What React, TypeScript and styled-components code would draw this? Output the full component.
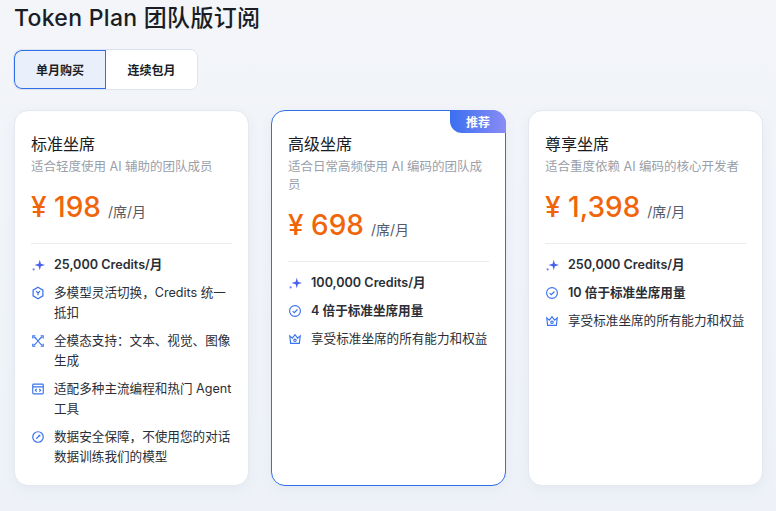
import React from "react";
import styled, { createGlobalStyle } from "styled-components";

const G = createGlobalStyle`
  body { margin:0; background:#f1f4f9; font-family: Inter, "Noto Sans CJK SC", sans-serif; color:#1a1d24; }
`;
const Page = styled.div`
  width:776px; height:511px; box-sizing:border-box; padding:0 13px 0 13px;
  background: linear-gradient(180deg,#f3f5f9,#eef2f8);
`;
const Title = styled.h1`
  margin:0; padding-top:3px; padding-left:1px; font-size:23px; font-weight:500; line-height:30px; letter-spacing:0.3px;
`;
const Toggle = styled.div`
  display:inline-flex; margin-top:16px; border:1px solid #dde3ee; border-radius:8px; background:#fff; overflow:hidden;
`;
const Tab = styled.button<{ $on?: boolean }>`
  width:${p => p.$on ? 92 : 91}px; height:39px; border:0; margin:0; font:600 12px Inter,"Noto Sans CJK SC",sans-serif; color:#1a1d24;
  background:${p => p.$on ? "#eaf0fb" : "#fff"};
  box-shadow:${p => p.$on ? "inset 0 0 0 1px #2f6fe8" : "none"}; border-radius:${p => p.$on ? "8px 0 0 8px" : "0"};
`;
const Cards = styled.div`
  display:grid; grid-template-columns:repeat(3,235px); gap:22px; margin-top:20px; padding-left:1px;
`;
const Card = styled.div<{ $hl?: boolean }>`
  position:relative; height:376px; box-sizing:border-box; background:#fff; border-radius:14px;
  border:1px solid ${p => p.$hl ? "#2f6fe8" : "#e3e8f1"}; padding:22px 16px 0 16px;
  box-shadow: 0 4px 14px rgba(60,80,130,0.06);
`;
const Badge = styled.div`
  position:absolute; top:-1px; right:-1px; width:56px; height:23px; border-radius:0 14px 0 12px;
  background:linear-gradient(90deg,#3a6ff0,#8a8cf5); color:#fff; font-size:12px; font-weight:600;
  display:flex; align-items:center; justify-content:center;
`;
const Name = styled.div`font-size:16px; line-height:22px;`;
const Sub = styled.div`margin-top:3px; font-size:12.5px; color:#9aa0aa; line-height:18px;`;
const Price = styled.div`margin-top:13px; display:flex; align-items:baseline; color:#f0650a; font-size:28px; font-weight:500; line-height:36px;`;
const Unit = styled.span`margin-left:7px; font-size:14px; color:#555b66; font-weight:400;`;
const Hr = styled.div`margin-top:13px; height:1px; background:#e8ebf0;`;
const List = styled.div`margin-top:11px; display:flex; flex-direction:column; gap:8px;`;
const Item = styled.div<{ $bold?: boolean }>`
  display:grid; grid-template-columns:18px 1fr; column-gap:5px; font-size:12.6px; line-height:20px;
  color:#2a2e36; font-weight:${p => p.$bold ? 600 : 400};
`;
const Ic = styled.svg`width:14px; height:14px; margin-top:3px; color:#3a73ee;`;

const Spark = () => (<Ic viewBox="0 0 16 16"><path d="M10 2 L11.3 6.7 L16 8 L11.3 9.3 L10 14 L8.7 9.3 L4 8 L8.7 6.7Z" fill="#4a5ff0"/><circle cx="3" cy="13" r="1.2" fill="#6a7ff5"/></Ic>);
const Hex = () => (<Ic viewBox="0 0 16 16" fill="none" stroke="currentColor" strokeWidth="1.4"><path d="M8 1.5 L13.6 4.7 V11.3 L8 14.5 L2.4 11.3 V4.7Z"/><path d="M5.8 6 L8 8 L10.2 6 M8 8 V10.5"/></Ic>);
const Cross = () => (<Ic viewBox="0 0 16 16" fill="none" stroke="currentColor" strokeWidth="1.3"><path d="M3 3 C7 5 9 11 13 13 M13 3 C9 5 7 11 3 13"/><path d="M2 5 V2 H5 M11 2 H14 V5 M2 11 V14 H5 M14 11 V14 H11"/></Ic>);
const Code = () => (<Ic viewBox="0 0 16 16" fill="none" stroke="currentColor" strokeWidth="1.3"><rect x="2" y="2.5" width="12" height="11" rx="1"/><path d="M2 5.5 H14 M6.5 8 L5 9.5 L6.5 11 M9.5 8 L11 9.5 L9.5 11"/></Ic>);
const Shield = () => (<Ic viewBox="0 0 16 16" fill="none" stroke="currentColor" strokeWidth="1.4"><circle cx="8" cy="8" r="6"/><path d="M6 10 L10 6 M8.5 6 H10 V7.5"/></Ic>);
const Check = () => (<Ic viewBox="0 0 16 16" fill="none" stroke="currentColor" strokeWidth="1.3"><circle cx="8" cy="8" r="6.2"/><path d="M5.3 8.2 L7.2 10 L10.8 6.3"/></Ic>);
const Crown = () => (<Ic viewBox="0 0 16 16" fill="none" stroke="currentColor" strokeWidth="1.3"><path d="M2 4.5 L5 7 L8 3 L11 7 L14 4.5 L13 13 H3Z"/><circle cx="8" cy="9.5" r="1.4"/></Ic>);

type F = { icon: React.ReactNode; text: string; bold?: boolean };
const plans: { name: string; sub: string; price: string; hl?: boolean; feats: F[] }[] = [
  { name: "标准坐席", sub: "适合轻度使用 AI 辅助的团队成员", price: "198", feats: [
    { icon: <Spark/>, text: "25,000 Credits/月", bold: true },
    { icon: <Hex/>, text: "多模型灵活切换，Credits 统一抵扣" },
    { icon: <Cross/>, text: "全模态支持：文本、视觉、图像生成" },
    { icon: <Code/>, text: "适配多种主流编程和热门 Agent 工具" },
    { icon: <Shield/>, text: "数据安全保障，不使用您的对话数据训练我们的模型" },
  ]},
  { name: "高级坐席", sub: "适合日常高频使用 AI 编码的团队成员", price: "698", hl: true, feats: [
    { icon: <Spark/>, text: "100,000 Credits/月", bold: true },
    { icon: <Check/>, text: "4 倍于标准坐席用量", bold: true },
    { icon: <Crown/>, text: "享受标准坐席的所有能力和权益" },
  ]},
  { name: "尊享坐席", sub: "适合重度依赖 AI 编码的核心开发者", price: "1,398", feats: [
    { icon: <Spark/>, text: "250,000 Credits/月", bold: true },
    { icon: <Check/>, text: "10 倍于标准坐席用量", bold: true },
    { icon: <Crown/>, text: "享受标准坐席的所有能力和权益" },
  ]},
];

export default function App() {
  return (
    <Page>
      <G/>
      <Title>Token Plan 团队版订阅</Title>
      <Toggle><Tab $on>单月购买</Tab><Tab>连续包月</Tab></Toggle>
      <Cards>
        {plans.map(p => (
          <Card key={p.name} $hl={p.hl}>
            {p.hl && <Badge>推荐</Badge>}
            <Name>{p.name}</Name>
            <Sub>{p.sub}</Sub>
            <Price>¥ {p.price}<Unit>/席/月</Unit></Price>
            <Hr/>
            <List>
              {p.feats.map(f => <Item key={f.text} $bold={f.bold}>{f.icon}<span>{f.text}</span></Item>)}
            </List>
          </Card>
        ))}
      </Cards>
    </Page>
  );
}
